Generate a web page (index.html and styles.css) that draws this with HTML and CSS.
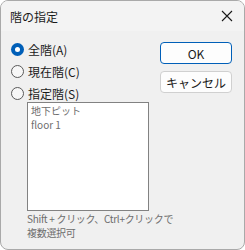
FILE: index.html
```html
<!DOCTYPE html>
<html lang="ja">
<head>
  <meta charset="UTF-8" />
  <title>階の指定</title>
  <link rel="stylesheet" href="styles.css">
</head>
<body>
  <div class="window">
    <div class="titlebar">
      <span class="title">階の指定</span>
      <svg class="close" width="12" height="12" viewBox="0 0 12 12">
        <path d="M1 1 L11 11 M11 1 L1 11" stroke="#1a1a1a" stroke-width="1.1" fill="none"/>
      </svg>
    </div>

    <div class="content">
      <div class="left">
        <div class="option"><span class="radio checked"></span>全階(A)</div>
        <div class="option"><span class="radio"></span>現在階(C)</div>
        <div class="option"><span class="radio"></span>指定階(S)</div>
        <div class="listbox">
          <div class="item">地下ピット</div>
          <div class="item">floor 1</div>
        </div>
        <div class="hint">
          <div>Shift + クリック、Ctrl+クリックで</div>
          <div>複数選択可</div>
        </div>
      </div>
      <div class="right">
        <button class="btn default">OK</button>
        <button class="btn">キャンセル</button>
      </div>
    </div>
  </div>
</body>
</html>
```

FILE: styles.css
```css
body {
  margin: 0;
  background: #ffffff;
  font-family: "Noto Sans CJK JP", "Liberation Sans", sans-serif;
}

.window {
  box-sizing: border-box;
  width: 245px;
  height: 250px;
  border: 1px solid #a9a9a9;
  border-radius: 8px;
  background: #f0f0f0;
  overflow: hidden;
}

.titlebar {
  height: 30px;
  background: #f3f3f3;
  display: flex;
  align-items: center;
  justify-content: space-between;
  padding: 0 10px 0 9px;
}

.title {
  font-size: 12px;
  color: #1a1a1a;
}

.close {
  margin-right: 1px;
}

.content {
  display: flex;
  padding: 7px 0 0 10px;
}

.left {
  width: 149px;
}

.option {
  height: 22px;
  display: flex;
  align-items: center;
  font-size: 12px;
  color: #1a1a1a;
}

.radio {
  box-sizing: border-box;
  width: 13px;
  height: 13px;
  border-radius: 50%;
  border: 1px solid #5a5a5a;
  background: #f7f7f7;
  margin-right: 4px;
  position: relative;
}

.radio.checked {
  border: none;
  background: #005fb8;
}

.radio.checked::after {
  content: "";
  position: absolute;
  left: 4px;
  top: 4px;
  width: 5px;
  height: 5px;
  border-radius: 50%;
  background: #ffffff;
}

.listbox {
  box-sizing: border-box;
  width: 122px;
  height: 109px;
  margin: -2px 0 0 16px;
  border: 1px solid #828282;
  background: #ffffff;
  padding: 1px 3px;
}

.item {
  font-size: 10px;
  line-height: 14px;
  color: #6d6d6d;
}

.hint {
  margin: 1px 0 0 16px;
  font-size: 10px;
  line-height: 14px;
  color: #6d6d6d;
  white-space: nowrap;
  letter-spacing: -0.3px;
}

.right {
  display: flex;
  flex-direction: column;
  gap: 7px;
  margin-top: 4px;
}

.btn {
  box-sizing: border-box;
  width: 72px;
  height: 22px;
  border: 1px solid #d0d0d0;
  border-radius: 4px;
  background: #fdfdfd;
  font-family: "Noto Sans CJK JP", "Liberation Sans", sans-serif;
  font-size: 12px;
  color: #1a1a1a;
  padding: 0;
}

.btn.default {
  border: 1.5px solid #005fb8;
}
```
